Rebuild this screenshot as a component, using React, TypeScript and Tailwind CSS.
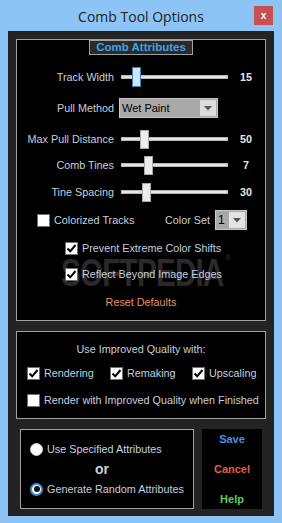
import React from 'react';

const sliders = [
  { label: 'Track Width', value: '15', pos: 11, focused: true },
  { label: 'Max Pull Distance', value: '50', pos: 19 },
  { label: 'Comb Tines', value: '7', pos: 23 },
  { label: 'Tine Spacing', value: '30', pos: 21 },
];

function Check({ checked }: { checked: boolean }) {
  return (
    <span className="w-[13px] h-[13px] bg-white border border-[#707070] flex items-center justify-center shrink-0">
      {checked && (
        <svg width="11" height="11" viewBox="0 0 11 11">
          <path d="M1.5 5.5 L4.2 8.3 L9.5 2" fill="none" stroke="#000" strokeWidth="2" />
        </svg>
      )}
    </span>
  );
}

function Radio({ selected }: { selected: boolean }) {
  return selected ? (
    <span className="w-[13px] h-[13px] rounded-full bg-white border-2 border-[#3d8fd6] flex items-center justify-center shrink-0">
      <span className="w-[6px] h-[6px] rounded-full bg-[#111]" />
    </span>
  ) : (
    <span className="w-[13px] h-[13px] rounded-full bg-white border border-[#d0d0d0] shrink-0" />
  );
}

function Slider({ pos, focused }: { pos: number; focused?: boolean }) {
  return (
    <div className="relative w-[107px] h-[22px] flex items-center">
      <div className="w-full h-[4px] bg-[#e4e4e4] border border-[#b8b8b8]" />
      <div
        className={
          focused
            ? 'absolute top-[1px] w-[9px] h-[20px] bg-[#cfe6fa] border border-[#3c7fb1] border-t-dotted'
            : 'absolute top-[2px] w-[9px] h-[19px] bg-[#ececec] border border-[#a8a8a8]'
        }
        style={{ left: pos }}
      />
    </div>
  );
}

function SliderRow({ label, value, pos, focused, mt }: { label: string; value: string; pos: number; focused?: boolean; mt: string }) {
  return (
    <div className={`flex items-center h-[22px] ${mt}`}>
      <span className="w-[97px] text-right">{label}</span>
      <span className="ml-[7px]">
        <Slider pos={pos} focused={focused} />
      </span>
      <span className="ml-[6px] w-[24px] text-center font-bold text-[#e6e6e6]">{value}</span>
    </div>
  );
}

function Arrow() {
  return (
    <svg width="8" height="5" viewBox="0 0 8 5">
      <path d="M0 0 L8 0 L4 4.5 Z" fill="#555" />
    </svg>
  );
}

export default function App() {
  return (
    <div className="w-[282px] h-[523px] bg-[#8bc4f5] flex flex-col text-[10.8px] text-[#c4cfdf] font-['Liberation_Sans',Arial,sans-serif]">
      <div className="relative h-[31px] flex items-center justify-center">
        <span className="text-[14px] text-[#222] font-['Open_Sans',sans-serif] mt-[1px]">Comb Tool Options</span>
        <div className="absolute left-[254px] top-[6px] w-[19px] h-[19px] bg-[#c75050] flex items-center justify-center text-white text-[10px] font-bold leading-none">
          x
        </div>
      </div>

      <div className="mx-[8px] mb-[7px] flex-1 bg-[#232323] px-[8px] pt-[8px] flex flex-col">
        {/* Comb attributes */}
        <div className="relative h-[282px] bg-black border border-[#a0a0a0] flex flex-col">
          <div className="absolute left-[44px] top-[214px] text-[38px] font-bold text-[#2a2a2a] tracking-[-1px] scale-x-[0.78] origin-left leading-none pointer-events-none">
            SOFTPEDIA<span className="text-[9px] align-top ml-[2px]">®</span>
          </div>
          <div className="relative self-center w-[104px] h-[15px] bg-[#2a2a2a] border border-[#a0a0a0] flex items-center justify-center text-[11.5px] font-bold text-[#3fa3e6]">
            Comb Attributes
          </div>

          <SliderRow {...sliders[0]} mt="mt-[11px]" />

          <div className="flex items-center h-[22px] mt-[9px]">
            <span className="w-[97px] text-right">Pull Method</span>
            <div className="ml-[5px] w-[99px] h-[20px] bg-[#a9a9a9] border border-[#c8c8c8] flex items-center">
              <span className="flex-1 pl-[2px] text-black text-[11px]">Wet Paint</span>
              <span className="w-[16px] h-[16px] mr-[1px] bg-[#dcdcdc] flex items-center justify-center">
                <Arrow />
              </span>
            </div>
          </div>

          <SliderRow {...sliders[1]} mt="mt-[9px]" />
          <SliderRow {...sliders[2]} mt="mt-[4px]" />
          <SliderRow {...sliders[3]} mt="mt-[5px]" />

          <div className="relative flex items-center h-[22px] mt-[6px] pl-[20px] pr-[18px]">
            <Check checked={false} />
            <span className="ml-[4px]">Colorized Tracks</span>
            <span className="ml-auto">Color Set</span>
            <div className="ml-[5px] w-[32px] h-[20px] bg-[#a9a9a9] border border-[#c8c8c8] flex items-center">
              <span className="flex-1 pl-[2px] text-black text-[12px]">1</span>
              <span className="w-[16px] h-[16px] mr-[1px] bg-[#e4e4e4] flex items-center justify-center">
                <Arrow />
              </span>
            </div>
          </div>

          <div className="relative flex items-center h-[22px] mt-[6px] pl-[48px]">
            <Check checked />
            <span className="ml-[4px]">Prevent Extreme Color Shifts</span>
          </div>
          <div className="relative flex items-center h-[22px] mt-[4px] pl-[48px]">
            <Check checked />
            <span className="ml-[4px]">Reflect Beyond Image Edges</span>
          </div>

          <div className="relative flex items-center justify-center h-[22px] mt-[6px] text-[#e6906c]">Reset Defaults</div>
        </div>

        {/* Quality */}
        <div className="mt-[10px] h-[88px] bg-black border border-[#a0a0a0] flex flex-col">
          <div className="h-[22px] mt-[6px] flex items-center justify-center">Use Improved Quality with:</div>
          <div className="h-[22px] mt-[2px] flex items-center pl-[10px]">
            <div className="w-[83px] flex items-center">
              <Check checked />
              <span className="ml-[4px]">Rendering</span>
            </div>
            <div className="w-[82px] flex items-center">
              <Check checked />
              <span className="ml-[4px]">Remaking</span>
            </div>
            <div className="flex items-center">
              <Check checked />
              <span className="ml-[4px]">Upscaling</span>
            </div>
          </div>
          <div className="h-[22px] mt-[5px] flex items-center pl-[10px]">
            <Check checked={false} />
            <span className="ml-[4px]">Render with Improved Quality when Finished</span>
          </div>
        </div>

        {/* Mode + buttons */}
        <div className="mt-[10px] h-[80px] flex pl-[4px] gap-[8px]">
          <div className="w-[174px] bg-black border border-[#a0a0a0] flex flex-col pt-[9px]">
            <div className="h-[20px] flex items-center pl-[9px]">
              <Radio selected={false} />
              <span className="ml-[4px]">Use Specified Attributes</span>
            </div>
            <div className="h-[20px] flex items-center pl-[74px] text-[14px] font-bold text-[#c8d0de]">or</div>
            <div className="h-[20px] flex items-center pl-[9px]">
              <Radio selected />
              <span className="ml-[4px]">Generate Random Attributes</span>
            </div>
          </div>
          <div className="w-[60px] bg-black flex flex-col items-center gap-[10px] font-bold text-[11px]">
            <div className="h-[20px] flex items-center text-[#4d8fe4]">Save</div>
            <div className="h-[20px] flex items-center text-[#e55a50]">Cancel</div>
            <div className="h-[20px] flex items-center text-[#55d060]">Help</div>
          </div>
        </div>
      </div>
    </div>
  );
}
